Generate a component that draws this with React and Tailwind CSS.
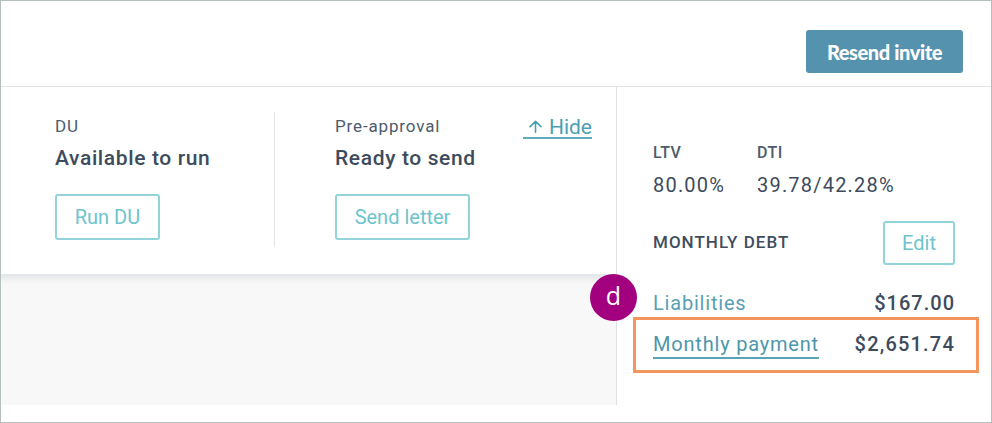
import React from "react";

const roboto = { fontFamily: "Roboto, 'Liberation Sans', sans-serif" };

function OutlineButton({ children, className }) {
  return (
    <div
      className={
        "flex items-center justify-center rounded-[3px] border-2 border-[#92d4da] bg-white text-[20px] text-[#6ec4cc] " +
        className
      }
    >
      {children}
    </div>
  );
}

export default function App() {
  return (
    <div
      className="relative flex h-[423px] w-[992px] flex-col border border-[#b5c0bc] bg-white"
      style={roboto}
    >
      {/* header */}
      <div className="flex h-[86px] shrink-0 items-start justify-end border-b border-[#e3e6e8] pr-[28px] pt-[29px]">
        <div
          className="flex h-[43px] w-[157px] items-center justify-center rounded-[3px] bg-[#5592ad] text-[20px] font-black tracking-[-0.02em] text-white"
          style={{ fontFamily: "Lato, 'Liberation Sans', sans-serif" }}
        >
          Resend invite
        </div>
      </div>

      {/* body */}
      <div className="flex h-[318px] shrink-0">
        {/* left */}
        <div className="flex w-[616px] flex-col border-r border-[#dde2e6]">
          <div className="flex h-[187px] items-start bg-white pt-[25px]">
            <div className="flex w-[273px] flex-col pl-[54px] pt-[4px]">
              <div className="h-[20px] text-[17px] leading-[20px] tracking-[0.05em] text-[#4d5b6b]">DU</div>
              <div className="mt-[8px] text-[21px] font-medium leading-[28px] tracking-[0.03em] text-[#3d4b5d]">
                Available to run
              </div>
              <OutlineButton className="mt-[22px] h-[46px] w-[105px]">Run DU</OutlineButton>
            </div>
            <div className="h-[135px] w-px bg-[#e1e4e8]" />
            <div className="flex flex-1 flex-col pl-[60px] pr-[24px] pt-[4px]">
              <div className="flex h-[20px] items-start justify-between">
                <div className="text-[17px] leading-[20px] tracking-[0.05em] text-[#4d5b6b]">Pre-approval</div>
                <div className="flex h-[23px] shrink-0 items-center gap-[6px] border-b-2 border-[#62abbd] pl-[5px] text-[21px] leading-[20px] text-[#4b9fb2]">
                  <svg width="15" height="13" viewBox="0 0 15 13" fill="none" stroke="#4b9fb2" strokeWidth="1.6" strokeLinecap="round" strokeLinejoin="round">
                    <path d="M7.5 12.2V1.3M2 6.6L7.5 1.3l5.5 5.3" />
                  </svg>
                  <span>Hide</span>
                </div>
              </div>
              <div className="mt-[8px] text-[21px] font-medium leading-[28px] tracking-[0.03em] text-[#3d4b5d]">
                Ready to send
              </div>
              <OutlineButton className="mt-[22px] h-[46px] w-[135px]">Send letter</OutlineButton>
            </div>
          </div>
          <div className="flex flex-1 flex-col bg-[#f8f8f8]">
            <div className="h-[10px] bg-gradient-to-b from-[#e2e6e9] to-[#f8f8f8]" />
          </div>
        </div>

        {/* right */}
        <div className="flex flex-1 flex-col px-[36px] pt-[56px]">
          <div className="flex">
            <div className="flex w-[104px] flex-col">
              <div className="text-[16px] font-medium leading-[20px] tracking-[0.03em] text-[#4d5b6b]">LTV</div>
              <div className="mt-[8px] text-[20px] leading-[28px] tracking-[0.06em] text-[#3d4b5d]">80.00%</div>
            </div>
            <div className="flex flex-col">
              <div className="text-[16px] font-medium leading-[20px] tracking-[0.03em] text-[#4d5b6b]">DTI</div>
              <div className="mt-[8px] text-[20px] leading-[28px] tracking-[0.06em] text-[#3d4b5d]">39.78/42.28%</div>
            </div>
          </div>
          <div className="mt-[22px] flex items-center justify-between">
            <div className="text-[17px] font-medium tracking-[0.06em] text-[#3f4d5e]">MONTHLY DEBT</div>
            <OutlineButton className="h-[44px] w-[72px]">Edit</OutlineButton>
          </div>
          <div className="mt-[24px] flex items-center justify-between text-[20px] leading-[28px]">
            <span className="tracking-[0.04em] text-[#5a9fb5]">Liabilities</span>
            <span className="font-medium tracking-[0.05em] text-[#3d4b5d]">$167.00</span>
          </div>
          <div className="mt-[13px] flex items-center justify-between text-[20px] leading-[28px]">
            <span className="tracking-[0.04em] text-[#4e96aa] underline decoration-[#5aa3b6] decoration-2 underline-offset-[6px]">
              Monthly payment
            </span>
            <span className="font-medium tracking-[0.06em] text-[#3d4b5d]">$2,651.74</span>
          </div>
        </div>
      </div>

      <div className="flex-1 bg-white" />

      {/* annotation overlays */}
      <div className="absolute left-[632px] top-[316px] h-[56px] w-[346px] border-[3px] border-[#f4955e]" />
      <div
        className="absolute left-[589px] top-[273px] flex h-[47px] w-[47px] items-center justify-center rounded-full bg-[#a2007f] pb-[3px] text-[25px] text-white"
        style={{ fontFamily: "'Open Sans', 'Noto Sans', sans-serif" }}
      >
        d
      </div>
    </div>
  );
}
